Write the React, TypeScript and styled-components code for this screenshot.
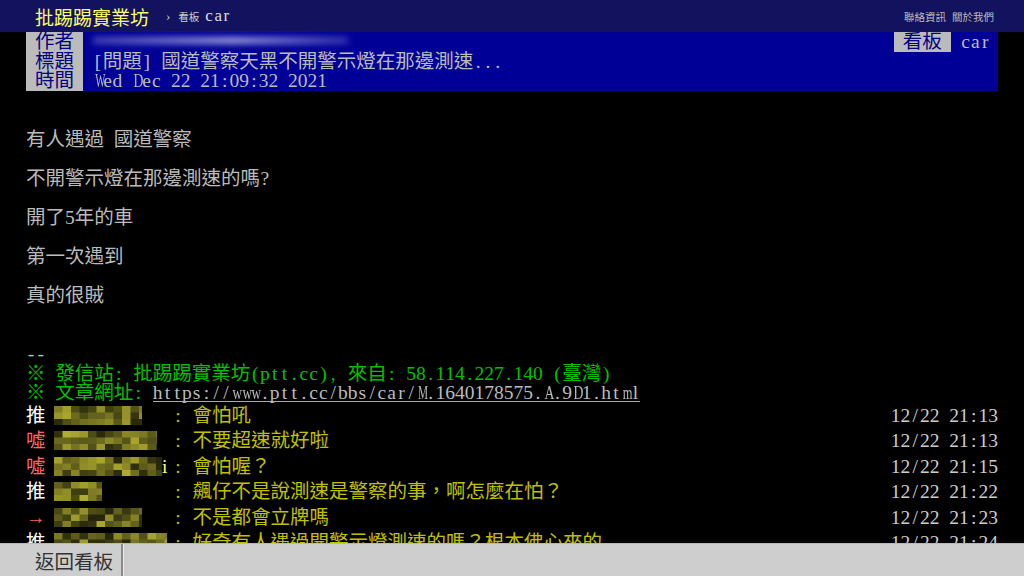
import { Fragment, type ReactNode } from 'react';
import styled, { createGlobalStyle } from 'styled-components';

const GlobalStyle = createGlobalStyle`
  html, body {
    margin: 0;
    padding: 0;
    background: #000;
    overflow: hidden;
  }
  body {
    font-family: "Liberation Serif", "Noto Sans CJK TC", serif;
    color: #bbb;
  }
`;

/* one half-width terminal cell, like the BBS grid */
const Cell = styled.span<{ $squeeze?: number }>`
  display: inline-block;
  width: 0.5em;
  text-align: center;
  transform: ${(p) => (p.$squeeze ? `scaleX(${p.$squeeze})` : 'none')};
`;

const squeeze: Record<string, number> = { W: 0.55, M: 0.58, m: 0.64, w: 0.68, A: 0.7, D: 0.7 };

const Term = ({ text }: { text: string }) => {
  const out: ReactNode[] = [];
  let buf = '';
  let i = 0;
  for (const ch of text) {
    if (ch.charCodeAt(0) > 0x2000) {
      buf += ch;
    } else {
      if (buf) {
        out.push(<Fragment key={`w${i}`}>{buf}</Fragment>);
        buf = '';
      }
      out.push(
        <Cell key={i} $squeeze={squeeze[ch]}>
          {ch === ' ' ? '\u00a0' : ch}
        </Cell>
      );
    }
    i++;
  }
  if (buf) out.push(<Fragment key="end">{buf}</Fragment>);
  return <>{out}</>;
};

const TopBar = styled.header`
  height: 32px;
  background-color: #12125f;
  display: flex;
  align-items: center;
  padding: 0 30px 0 35px;
  box-sizing: border-box;
`;

const Logo = styled.a`
  color: #ffff66;
  font-size: 19px;
  text-decoration: none;
`;

const Crumb = styled.span`
  color: #ccc;
  font-size: 13px;
  margin: 0 8px 0 17px;
`;

const BoardLabel = styled.span`
  color: #ccc;
  font-size: 10.5px;
  margin-right: 6px;
`;

const BoardName = styled.span`
  color: #ddd;
  font-size: 17px;
  letter-spacing: 1.5px;
`;

const TopLinks = styled.nav`
  margin-left: auto;
  display: flex;
  gap: 6px;
  font-size: 10.5px;
  color: #bbb;
`;

const Main = styled.main`
  padding: 0 26px;
  font-size: 19.5px;
  line-height: 19.5px;
`;

const MetaBox = styled.div`
  background-color: #000096;
`;

const MetaRow = styled.div`
  display: flex;
  height: 19.5px;
  white-space: pre;
`;

const MetaTag = styled.span`
  background-color: #bbb;
  color: #000080;
  padding: 0 9px;
`;

const MetaValue = styled.span`
  color: #bbb;
  padding-left: 10px;
`;

const MetaRight = styled.span`
  margin-left: auto;
  display: flex;
  padding-right: 8px;
`;

const Blurred = styled.span`
  display: block;
  width: 255px;
  height: 7px;
  margin-top: 5px;
  background: linear-gradient(
    90deg,
    rgba(190, 190, 240, 0.35),
    rgba(225, 225, 255, 0.7) 55%,
    rgba(200, 200, 250, 0.25)
  );
  filter: blur(3px);
`;

const Line = styled.div<{ $tone?: 'green' | 'gray' }>`
  min-height: 19.5px;
  white-space: pre;
  color: ${(p) => (p.$tone === 'green' ? '#00c000' : '#bbb')};
`;

const Link = styled.a`
  display: inline-block;
  height: 18px;
  vertical-align: top;
  color: #bbb;
  border-bottom: 1px solid #aaa;
`;

const PushRow = styled.div`
  display: flex;
  align-items: center;
  height: 25.5px;
  white-space: pre;
`;

const PushTag = styled.span<{ $bad?: boolean }>`
  width: 28px;
  color: ${(p) => (p.$bad ? '#ff6666' : '#fff')};
`;

const PushUser = styled.span`
  width: 119px;
  display: flex;
  align-items: center;
  color: #ffff66;
`;

const PushContent = styled.span`
  color: #c0c000;
`;

const PushTime = styled.span`
  margin-left: auto;
  color: #ccc;
`;

const BottomBar = styled.footer`
  position: fixed;
  left: 0;
  right: 0;
  bottom: 0;
  height: 32px;
  background-color: #cecece;
  border-top: 1px solid #b8b8b8;
  display: flex;
  align-items: stretch;
  padding-left: 26px;
`;

const BackButton = styled.a`
  display: flex;
  align-items: center;
  padding: 0 8px 0 9px;
  font-size: 19.5px;
  color: #333;
  border-right: 2px solid #8a8a8a;
  box-shadow: 1px 0 0 #e8e8e8;
`;

const Mosaic = ({ width, seed }: { width: number; seed: number }) => {
  let s = seed;
  const rnd = () => {
    s = (s * 9301 + 49297) % 233280;
    return s / 233280;
  };
  const cell = 8.5;
  const cols = Math.ceil(width / cell);
  const rects = [];
  for (let r = 0; r < 3; r++) {
    for (let c = 0; c < cols; c++) {
      const t = 0.15 + rnd() * 0.55;
      const col = `rgb(${Math.round(250 * t)}, ${Math.round(245 * t)}, ${Math.round(70 * t)})`;
      rects.push(<rect key={`${r}-${c}`} x={c * cell} y={r * 6.5} width={cell + 0.5} height={7} fill={col} />);
    }
  }
  return (
    <svg width={width} height={19} viewBox={`0 0 ${width} 19`}>
      {rects}
    </svg>
  );
};

const body = [
  '',
  '',
  '有人遇過 國道警察',
  '',
  '不開警示燈在那邊測速的嗎?',
  '',
  '開了5年的車',
  '',
  '第一次遇到',
  '',
  '真的很賊',
  '',
  '',
  '--',
];

const pushes = [
  { tag: '推', bad: false, w: 88, seed: 11, tail: '', text: '會怕吼', time: '12/22 21:13' },
  { tag: '噓', bad: true, w: 103, seed: 47, tail: '', text: '不要超速就好啦', time: '12/22 21:13' },
  { tag: '噓', bad: true, w: 108, seed: 93, tail: 'i', text: '會怕喔？', time: '12/22 21:15' },
  { tag: '推', bad: false, w: 48, seed: 131, tail: '', text: '飆仔不是說測速是警察的事，啊怎麼在怕？', time: '12/22 21:22' },
  { tag: '→', bad: true, w: 88, seed: 177, tail: '', text: '不是都會立牌嗎', time: '12/22 21:23' },
  { tag: '推', bad: false, w: 113, seed: 211, tail: '', text: '好奇有人遇過開警示燈測速的嗎？根本佛心來的', time: '12/22 21:24' },
];

const App = () => {
  return (
    <>
      <GlobalStyle />
      <TopBar>
        <Logo>批踢踢實業坊</Logo>
        <Crumb>›</Crumb>
        <BoardLabel>看板</BoardLabel>
        <BoardName>car</BoardName>
        <TopLinks>
          <span>聯絡資訊</span>
          <span>關於我們</span>
        </TopLinks>
      </TopBar>
      <Main>
        <MetaBox>
          <MetaRow>
            <MetaTag>作者</MetaTag>
            <MetaValue>
              <Blurred />
            </MetaValue>
            <MetaRight>
              <MetaTag>看板</MetaTag>
              <MetaValue>
                <Term text="car" />
              </MetaValue>
            </MetaRight>
          </MetaRow>
          <MetaRow>
            <MetaTag>標題</MetaTag>
            <MetaValue>
              <Term text="[問題] 國道警察天黑不開警示燈在那邊測速..." />
            </MetaValue>
          </MetaRow>
          <MetaRow>
            <MetaTag>時間</MetaTag>
            <MetaValue>
              <Term text="Wed Dec 22 21:09:32 2021" />
            </MetaValue>
          </MetaRow>
        </MetaBox>
        {body.map((t, i) => (
          <Line key={i}>
            <Term text={t} />
          </Line>
        ))}
        <Line $tone="green">
          <Term text="※ 發信站: 批踢踢實業坊(ptt.cc), 來自: 58.114.227.140 (臺灣)" />
        </Line>
        <Line $tone="green">
          <Term text="※ 文章網址: " />
          <Link>
            <Term text="https://www.ptt.cc/bbs/car/M.1640178575.A.9D1.html" />
          </Link>
        </Line>
        {pushes.map((p, i) => (
          <PushRow key={i}>
            <PushTag $bad={p.bad}>{p.tag}</PushTag>
            <PushUser>
              <Mosaic width={p.w} seed={p.seed} />
              {p.tail}
            </PushUser>
            <PushContent>
              <Term text={`: ${p.text}`} />
            </PushContent>
            <PushTime>
              <Term text={p.time} />
            </PushTime>
          </PushRow>
        ))}
      </Main>
      <BottomBar>
        <BackButton>返回看板</BackButton>
      </BottomBar>
    </>
  );
};

export default App;
